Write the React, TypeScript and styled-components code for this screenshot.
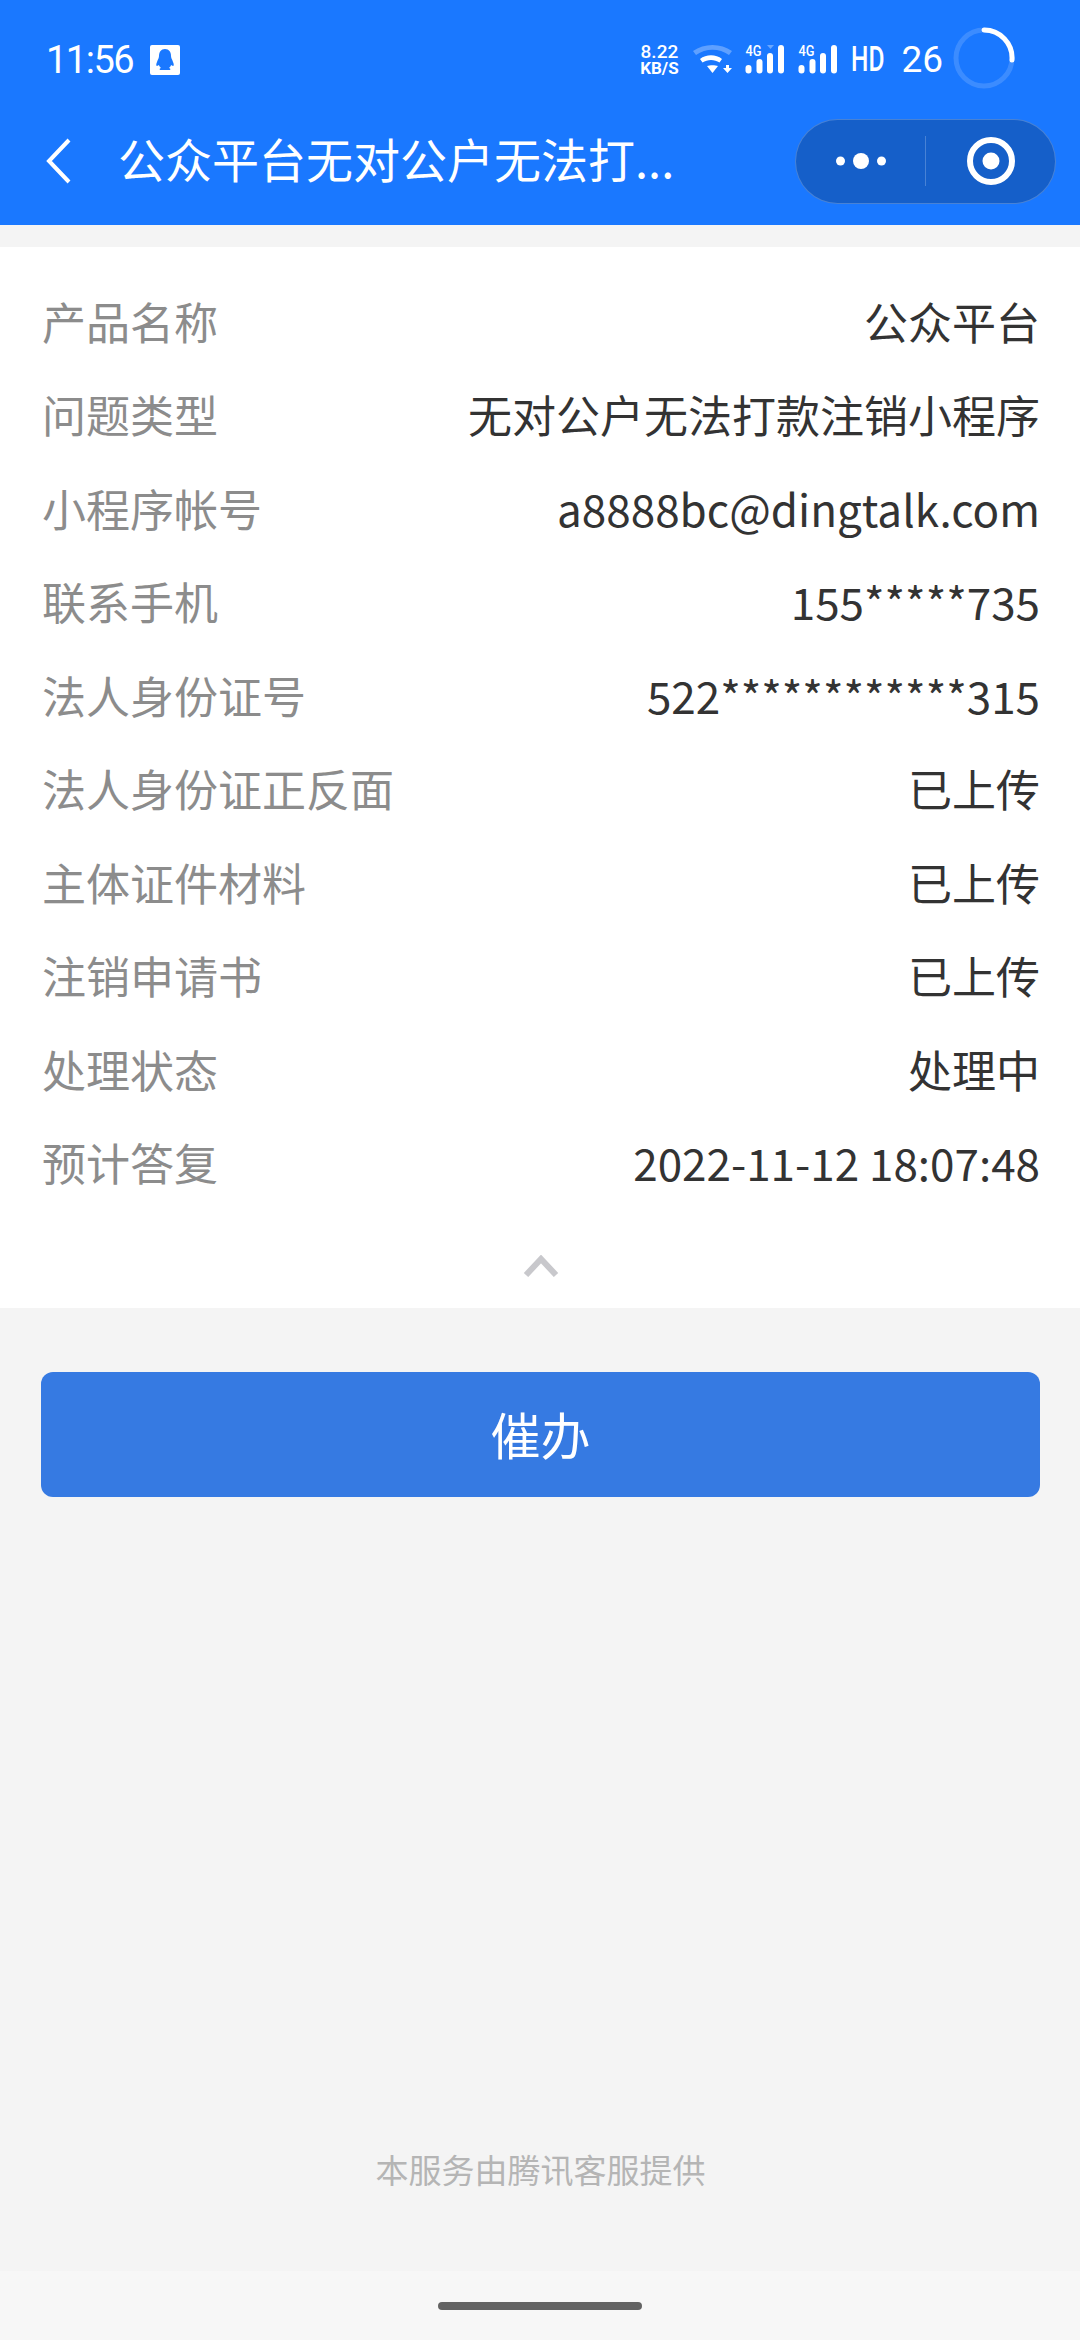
import React from 'react';
import styled, { createGlobalStyle } from 'styled-components';

const FONT = `"Noto Sans CJK SC", "Noto Sans", sans-serif`;

const rows = [
  ['产品名称', '公众平台'],
  ['问题类型', '无对公户无法打款注销小程序'],
  ['小程序帐号', 'a8888bc@dingtalk.com'],
  ['联系手机', '155*****735'],
  ['法人身份证号', '522************315'],
  ['法人身份证正反面', '已上传'],
  ['主体证件材料', '已上传'],
  ['注销申请书', '已上传'],
  ['处理状态', '处理中'],
  ['预计答复', '2022-11-12 18:07:48'],
];

const Signal = ({ active }: { active?: boolean }) => (
  <SignalIcon width="40" height="30" viewBox="0 0 40 30">
    <text x="0.500" y="11" fontSize="15" fontWeight="500" fill="#fff" fontFamily="Roboto, sans-serif" textLength="16" lengthAdjust="spacingAndGlyphs">4G</text>
    {active && <path d="M22 0h7l-3.500 4z" fill="#fff" opacity=".35" />}
    <rect x="0.500" y="20" width="6" height="8.500" rx="3" fill="#fff" />
    <rect x="11.500" y="14" width="6" height="14.500" rx="3" fill="#fff" />
    <rect x="22" y="8" width="6" height="20.500" rx="3" fill="#fff" />
    <rect x="33" y="0" width="6" height="28.500" rx="3" fill="#fff" />
  </SignalIcon>
);

const App = () => {
  return (
    <>
      <GlobalStyle />
      <Page>
        <Header>
          <StatusBar>
            <StatusLeft>
              <Time>11:56</Time>
              <svg width="30" height="30" viewBox="0 0 30 30">
                <rect width="30" height="30" rx="2" fill="#fff" />
                <path d="M15 4c-4 0-6 3-6 7 0 2-1 3-2 6-1 2-1 4 0 4l2-1c0 1 1 2 2 3-1 0-2 1-1 2h10c1-1 0-2-1-2 1-1 2-2 2-3l2 1c1 0 1-2 0-4-1-3-2-4-2-6 0-4-2-7-6-7z" fill="#1a78ff" />
              </svg>
            </StatusLeft>
            <StatusRight>
              <StatusIcons>
                <Speed>
                  <span>8.22</span>
                  <small>KB/S</small>
                </Speed>
                <svg width="39" height="30" viewBox="0 0 39 30">
                  <path d="M0 6c11-8 28-8 39 0l-3 4C26 3 13 3 3 10z" fill="#fff" opacity=".3" />
                  <path d="M7 14c6-5 16-5 22 0l-2.500 3.500c-5-3.500-12-3.500-17 0z" fill="#fff" />
                  <path d="M14 21c3-1 8-1 11 0l-5.500 7z" fill="#fff" />
                  <path d="M33 20h3v3h3l-4.500 5-4.500-5h3z" fill="#fff" />
                </svg>
                <Signal active />
                <Signal />
                <Hd>HD</Hd>
                <Battery>26</Battery>
              </StatusIcons>
              <svg width="62" height="62" viewBox="0 0 62 62">
                <circle cx="31" cy="31" r="28" fill="none" stroke="#fff" strokeOpacity=".15" strokeWidth="5" />
                <path d="M31 3a28 28 0 0 1 28 30" fill="none" stroke="#fff" strokeWidth="5" strokeLinecap="round" />
              </svg>
            </StatusRight>
          </StatusBar>
          <NavBar>
            <svg width="26" height="46" viewBox="0 0 26 46">
              <path d="M23 2L3 23l20 21" fill="none" stroke="#fff" strokeWidth="4" />
            </svg>
            <Title>公众平台无对公户无法打...</Title>
            <Capsule>
              <CapsuleCell>
                <svg width="50" height="16" viewBox="0 0 50 16">
                  <circle cx="4.500" cy="8" r="4.500" fill="#fff" />
                  <circle cx="25" cy="8" r="8" fill="#fff" />
                  <circle cx="45.500" cy="8" r="4.500" fill="#fff" />
                </svg>
              </CapsuleCell>
              <CapsuleDivider />
              <CapsuleCell>
                <svg width="48" height="48" viewBox="0 0 48 48">
                  <circle cx="24" cy="24" r="21" fill="none" stroke="#fff" strokeWidth="6" />
                  <circle cx="24" cy="24" r="8.500" fill="#fff" />
                </svg>
              </CapsuleCell>
            </Capsule>
          </NavBar>
        </Header>

        <Card>
          {rows.map(([label, value]) => (
            <Row key={label}>
              <Label>{label}</Label>
              <Value>{value}</Value>
            </Row>
          ))}
          <Collapse>
            <svg width="36" height="22" viewBox="0 0 36 22">
              <path d="M3 20L18 4l15 16" fill="none" stroke="#c8c8cc" strokeWidth="6" />
            </svg>
          </Collapse>
        </Card>

        <Content>
          <Button>催办</Button>
          <Footer>本服务由腾讯客服提供</Footer>
        </Content>

        <HomeBar>
          <HomeIndicator />
        </HomeBar>
      </Page>
    </>
  );
};

export default App;

const GlobalStyle = createGlobalStyle`
  *, *::before, *::after {
    box-sizing: border-box;
  }

  html, body {
    margin: 0;
    padding: 0;
    background: #f4f4f4;
  }
`;

const Page = styled.div`
  width: 1080px;
  height: 2340px;
  display: flex;
  flex-direction: column;
  font-family: ${FONT};
  overflow: hidden;
  background: #f4f4f4;
`;

const Header = styled.header`
  height: 225px;
  background: #1a78ff;
  color: #fff;
  display: flex;
  flex-direction: column;
`;

const StatusBar = styled.div`
  height: 116px;
  padding: 0 65px 0 46px;
  display: flex;
  align-items: center;
  justify-content: space-between;
`;

const StatusLeft = styled.div`
  display: flex;
  align-items: center;
  gap: 17px;
  padding-top: 3px;
`;

const Time = styled.span`
  font-family: Roboto, sans-serif;
  font-size: 38px;
  letter-spacing: -1.500px;
`;

const StatusRight = styled.div`
  display: flex;
  align-items: center;
  gap: 10px;
`;

const StatusIcons = styled.div`
  display: flex;
  align-items: center;
  gap: 13px;
  padding-top: 3px;
`;

const Speed = styled.div`
  width: 38px;
  margin-right: 2px;
  display: flex;
  flex-direction: column;
  align-items: center;
  font-family: Roboto, sans-serif;
  font-size: 19px;
  font-weight: 500;
  line-height: 17px;

  small {
    font-size: 17px;
    font-weight: 700;
    white-space: nowrap;
  }
`;

const SignalIcon = styled.svg`
  display: block;
  overflow: visible;
`;

const Hd = styled.span`
  width: 34px;
  font-family: Roboto, sans-serif;
  font-size: 35px;
  font-weight: 500;
  transform: scaleX(0.7);
  transform-origin: left center;
  white-space: nowrap;
`;

const Battery = styled.span`
  font-family: Roboto, sans-serif;
  font-size: 37px;
  margin-left: 3px;
`;

const NavBar = styled.div`
  height: 109px;
  padding: 0 24px 19px 46px;
  display: flex;
  align-items: center;
`;

const Title = styled.div`
  flex: 1;
  margin: 0 0 8px 46px;
  font-size: 47px;
  white-space: nowrap;
`;

const Capsule = styled.div`
  width: 261px;
  height: 85px;
  border: 1px solid rgba(255, 255, 255, 0.22);
  border-radius: 43px;
  background: #155fc9;
  display: flex;
  align-items: center;
`;

const CapsuleCell = styled.div`
  flex: 1;
  display: flex;
  align-items: center;
  justify-content: center;
`;

const CapsuleDivider = styled.div`
  width: 1px;
  height: 50px;
  background: rgba(255, 255, 255, 0.22);
`;

const Card = styled.section`
  margin-top: 22px;
  height: 1061px;
  padding: 27px 40px 0 42px;
  background: #fff;
`;

const Row = styled.div`
  height: 93.500px;
  display: flex;
  align-items: center;
  justify-content: space-between;
  font-size: 44px;
`;

const Label = styled.span`
  color: #8c8c8c;
`;

const Value = styled.span`
  color: #333;
`;

const Collapse = styled.div`
  margin-top: 46px;
  display: flex;
  justify-content: center;
`;

const Content = styled.main`
  flex: 1;
  padding: 64px 40px 0 41px;
  display: flex;
  flex-direction: column;
`;

const Button = styled.button`
  height: 125px;
  border: none;
  border-radius: 12px;
  background: #367ae2;
  color: #fff;
  font-family: ${FONT};
  font-size: 50px;
  padding: 0 0 4px;
`;

const Footer = styled.div`
  margin-top: auto;
  margin-bottom: 78px;
  text-align: center;
  font-size: 33px;
  color: #b5b5b5;
`;

const HomeBar = styled.div`
  height: 69px;
  background: #f7f7f7;
  display: flex;
  justify-content: center;
  padding-top: 31px;
`;

const HomeIndicator = styled.div`
  width: 204px;
  height: 8px;
  border-radius: 4px;
  background: #636363;
`;
